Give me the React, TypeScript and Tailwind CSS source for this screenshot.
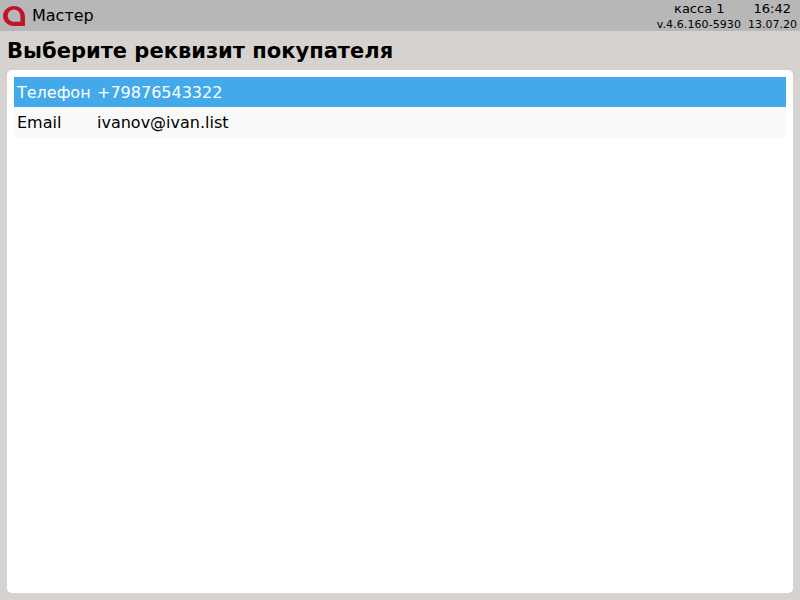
import React from 'react';

const rows = [
  { label: 'Телефон', value: '+79876543322', active: true },
  { label: 'Email', value: 'ivanov@ivan.list', active: false },
];

const Logo = () => (
  <svg width="22" height="20" viewBox="0 0 22 20" className="ml-[3px] shrink-0">
    <path
      fillRule="evenodd"
      fill="#c0152a"
      d="M11 0C4.900 0 0 4.500 0 10s4.900 10 11 10h11V11C22 4.900 17.100 0 11 0zm0 3.600c3.400 0 6.400 3 6.400 6.400v5.800H11C7.600 15.800 4.800 13 4.800 9.700S7.600 3.600 11 3.600z"
    />
  </svg>
);

const App = () => {
  return (
    <div className="w-[800px] h-[600px] flex flex-col bg-[#d6d2cf] text-black font-['DejaVu_Sans',sans-serif] overflow-hidden">
      <div className="h-[31px] shrink-0 flex items-center bg-[#b7b7b7]">
        <Logo />
        <span className="ml-[7px] text-[16px] leading-[20px]">Мастер</span>
        <div className="ml-auto mr-[3px] flex flex-col items-end">
          <div className="flex h-[17px] items-center text-[13px] leading-[17px]">
            <span className="mr-[29px]">касса 1</span>
            <span className="mr-[6px]">16:42</span>
          </div>
          <div className="flex h-[14px] items-center pt-[2px] text-[11px] leading-[14px]">
            <span className="mr-[7px] tracking-[0.08px]">v.4.6.160-5930</span>
            <span>13.07.20</span>
          </div>
        </div>
      </div>
      <h1 className="h-[39px] shrink-0 pl-[7px] pt-[7px] text-[21px] leading-[27px] font-bold">
        Выберите реквизит покупателя
      </h1>
      <div className="mx-[7px] mb-[7px] flex-1 rounded-[5px] bg-white p-[7px]">
        {rows.map((row) => (
          <div
            key={row.label}
            className={`flex h-[30px] items-center pl-[3px] pt-[2px] text-[16px] ${row.active ? 'bg-[#42aaea] text-white' : 'bg-[#f9f9f9] text-black'}`}
          >
            <span className="w-[80px]">{row.label}</span>
            <span>{row.value}</span>
          </div>
        ))}
      </div>
    </div>
  );
};

export default App;
